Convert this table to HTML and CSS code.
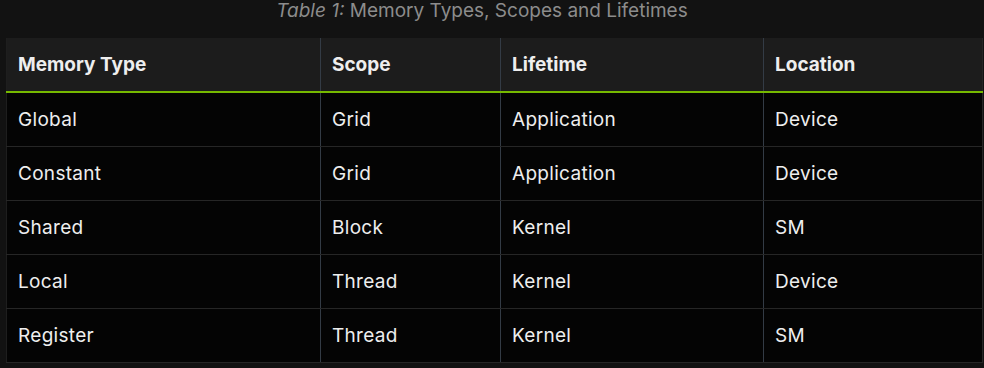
FILE: index.html
```html
<!DOCTYPE html>
<html lang="en">
<head>
<meta charset="utf-8">
<link rel="stylesheet" href="styles.css">
</head>
<body>
<div class="page">
  <div class="caption"><em>Table 1:</em> Memory Types, Scopes and Lifetimes</div>
  <table class="mem-table">
    <colgroup>
      <col class="c1"><col class="c2"><col class="c3"><col class="c4">
    </colgroup>
    <thead>
      <tr><th>Memory Type</th><th>Scope</th><th>Lifetime</th><th>Location</th></tr>
    </thead>
    <tbody>
      <tr><td>Global</td><td>Grid</td><td>Application</td><td>Device</td></tr>
      <tr><td>Constant</td><td>Grid</td><td>Application</td><td>Device</td></tr>
      <tr><td>Shared</td><td>Block</td><td>Kernel</td><td>SM</td></tr>
      <tr><td>Local</td><td>Thread</td><td>Kernel</td><td>Device</td></tr>
      <tr><td>Register</td><td>Thread</td><td>Kernel</td><td>SM</td></tr>
    </tbody>
  </table>
</div>
</body>
</html>
```
FILE: styles.css
```css
html, body {
  margin: 0;
  padding: 0;
  background: #121212;
}
.page {
  width: 984px;
  height: 368px;
  padding-left: 6px;
  box-sizing: border-box;
  font-family: Inter, "Noto Sans", sans-serif;
  color: #eeeeee;
}
.caption {
  width: 976px;
  height: 38px;
  box-sizing: border-box;
  padding-right: 24px;
  text-align: center;
  font-size: 19px;
  line-height: 22px;
  color: #8c8c8c;
  white-space: nowrap;
}
.caption em {
  font-style: italic;
}
.mem-table {
  width: 976px;
  border-collapse: collapse;
  table-layout: fixed;
  background: #040404;
  font-size: 19px;
}
.c1 { width: 314px; }
.c2 { width: 180px; }
.c3 { width: 263px; }
.c4 { width: 219px; }
.mem-table th {
  background: #1c1c1c;
  height: 54px;
  padding: 0 11px;
  text-align: left;
  font-weight: 700;
  border-bottom: 2px solid #76b900;
  border-left: 1px solid #333b45;
  box-sizing: border-box;
}
.mem-table td {
  height: 54px;
  padding: 0 11px;
  border-bottom: 1px solid #262626;
  border-left: 1px solid #333b45;
  box-sizing: border-box;
  font-weight: 400;
  letter-spacing: 0.3px;
}
.mem-table th:first-child,
.mem-table td:first-child {
  border-left: 1px solid #1e1e1e;
}
.mem-table td:last-child,
.mem-table th:last-child {
  border-right: 1px solid #262626;
}
```
